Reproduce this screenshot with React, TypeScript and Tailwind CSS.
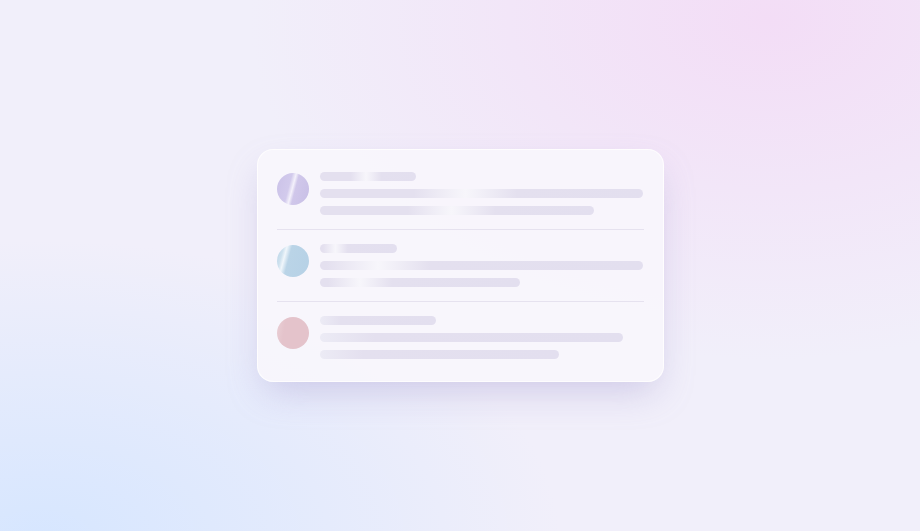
const rows = [
  {
    avatar:
      "linear-gradient(105deg, #cbc2e8 0%, #d2caec 38%, #f4f1fb 48%, #d0c7ea 56%, #c8bfe6 100%)",
    lines: [
      { width: 96, glow: 48 },
      { width: 323, glow: 45 },
      { width: 274, glow: 48 },
    ],
  },
  {
    avatar:
      "linear-gradient(105deg, #b7d2e6 0%, #cfe2ef 18%, #f0f6fb 26%, #bad4e7 38%, #b6d1e6 100%)",
    lines: [
      { width: 77, glow: 20 },
      { width: 323, glow: 18 },
      { width: 200, glow: 20 },
    ],
  },
  {
    avatar:
      "linear-gradient(100deg, #ead0d6 0%, #e4c3cb 25%, #e4c3cb 100%)",
    lines: [
      { width: 116, glow: 0 },
      { width: 303, glow: 0 },
      { width: 239, glow: 0 },
    ],
  },
];

function shimmer(glow: number) {
  if (glow === 0) {
    return "linear-gradient(90deg, #ecebf5 0%, #e4e0ef 18%, #e3dfef 100%)";
  }
  return `linear-gradient(90deg, #e4e0ef 0%, #e4e0ef ${glow - 16}%, #f7f6fb ${glow}%, #e4e0ef ${glow + 16}%, #e3dfef 100%)`;
}

function SkeletonRow({ row }: { row: (typeof rows)[number] }) {
  return (
    <div className="flex items-start gap-[11px] py-[14px]">
      <div
        className="mt-px h-8 w-8 shrink-0 rounded-full"
        style={{ backgroundImage: row.avatar }}
      />
      <div className="flex flex-1 flex-col gap-2">
        {row.lines.map((line, i) => (
          <div
            className="h-[9px] rounded-full"
            key={i}
            style={{ width: line.width, backgroundImage: shimmer(line.glow) }}
          />
        ))}
      </div>
    </div>
  );
}

export default function App() {
  return (
    <div
      className="relative flex h-[531px] w-[920px] items-center justify-center overflow-hidden bg-[#f1effa]"
      style={{ fontFamily: "Inter, sans-serif" }}
    >
      <div className="pointer-events-none absolute inset-0 bg-[radial-gradient(ellipse_520px_340px_at_770px_20px,#f3ddf6_0%,rgba(243,221,246,0)_100%)]" />
      <div className="pointer-events-none absolute inset-0 bg-[radial-gradient(ellipse_520px_300px_at_40px_540px,#d6e6ff_0%,rgba(214,230,255,0)_100%)]" />
      <div className="relative w-[407px] rounded-2xl border border-white/80 bg-[#f8f6fc]/90 px-[19px] py-2 shadow-[0_16px_36px_-8px_rgba(150,140,200,0.38)]">
        {rows.map((row, i) => (
          <div key={i}>
            {i > 0 && <div className="h-px bg-[#e6e2ef]" />}
            <SkeletonRow row={row} />
          </div>
        ))}
      </div>
    </div>
  );
}
